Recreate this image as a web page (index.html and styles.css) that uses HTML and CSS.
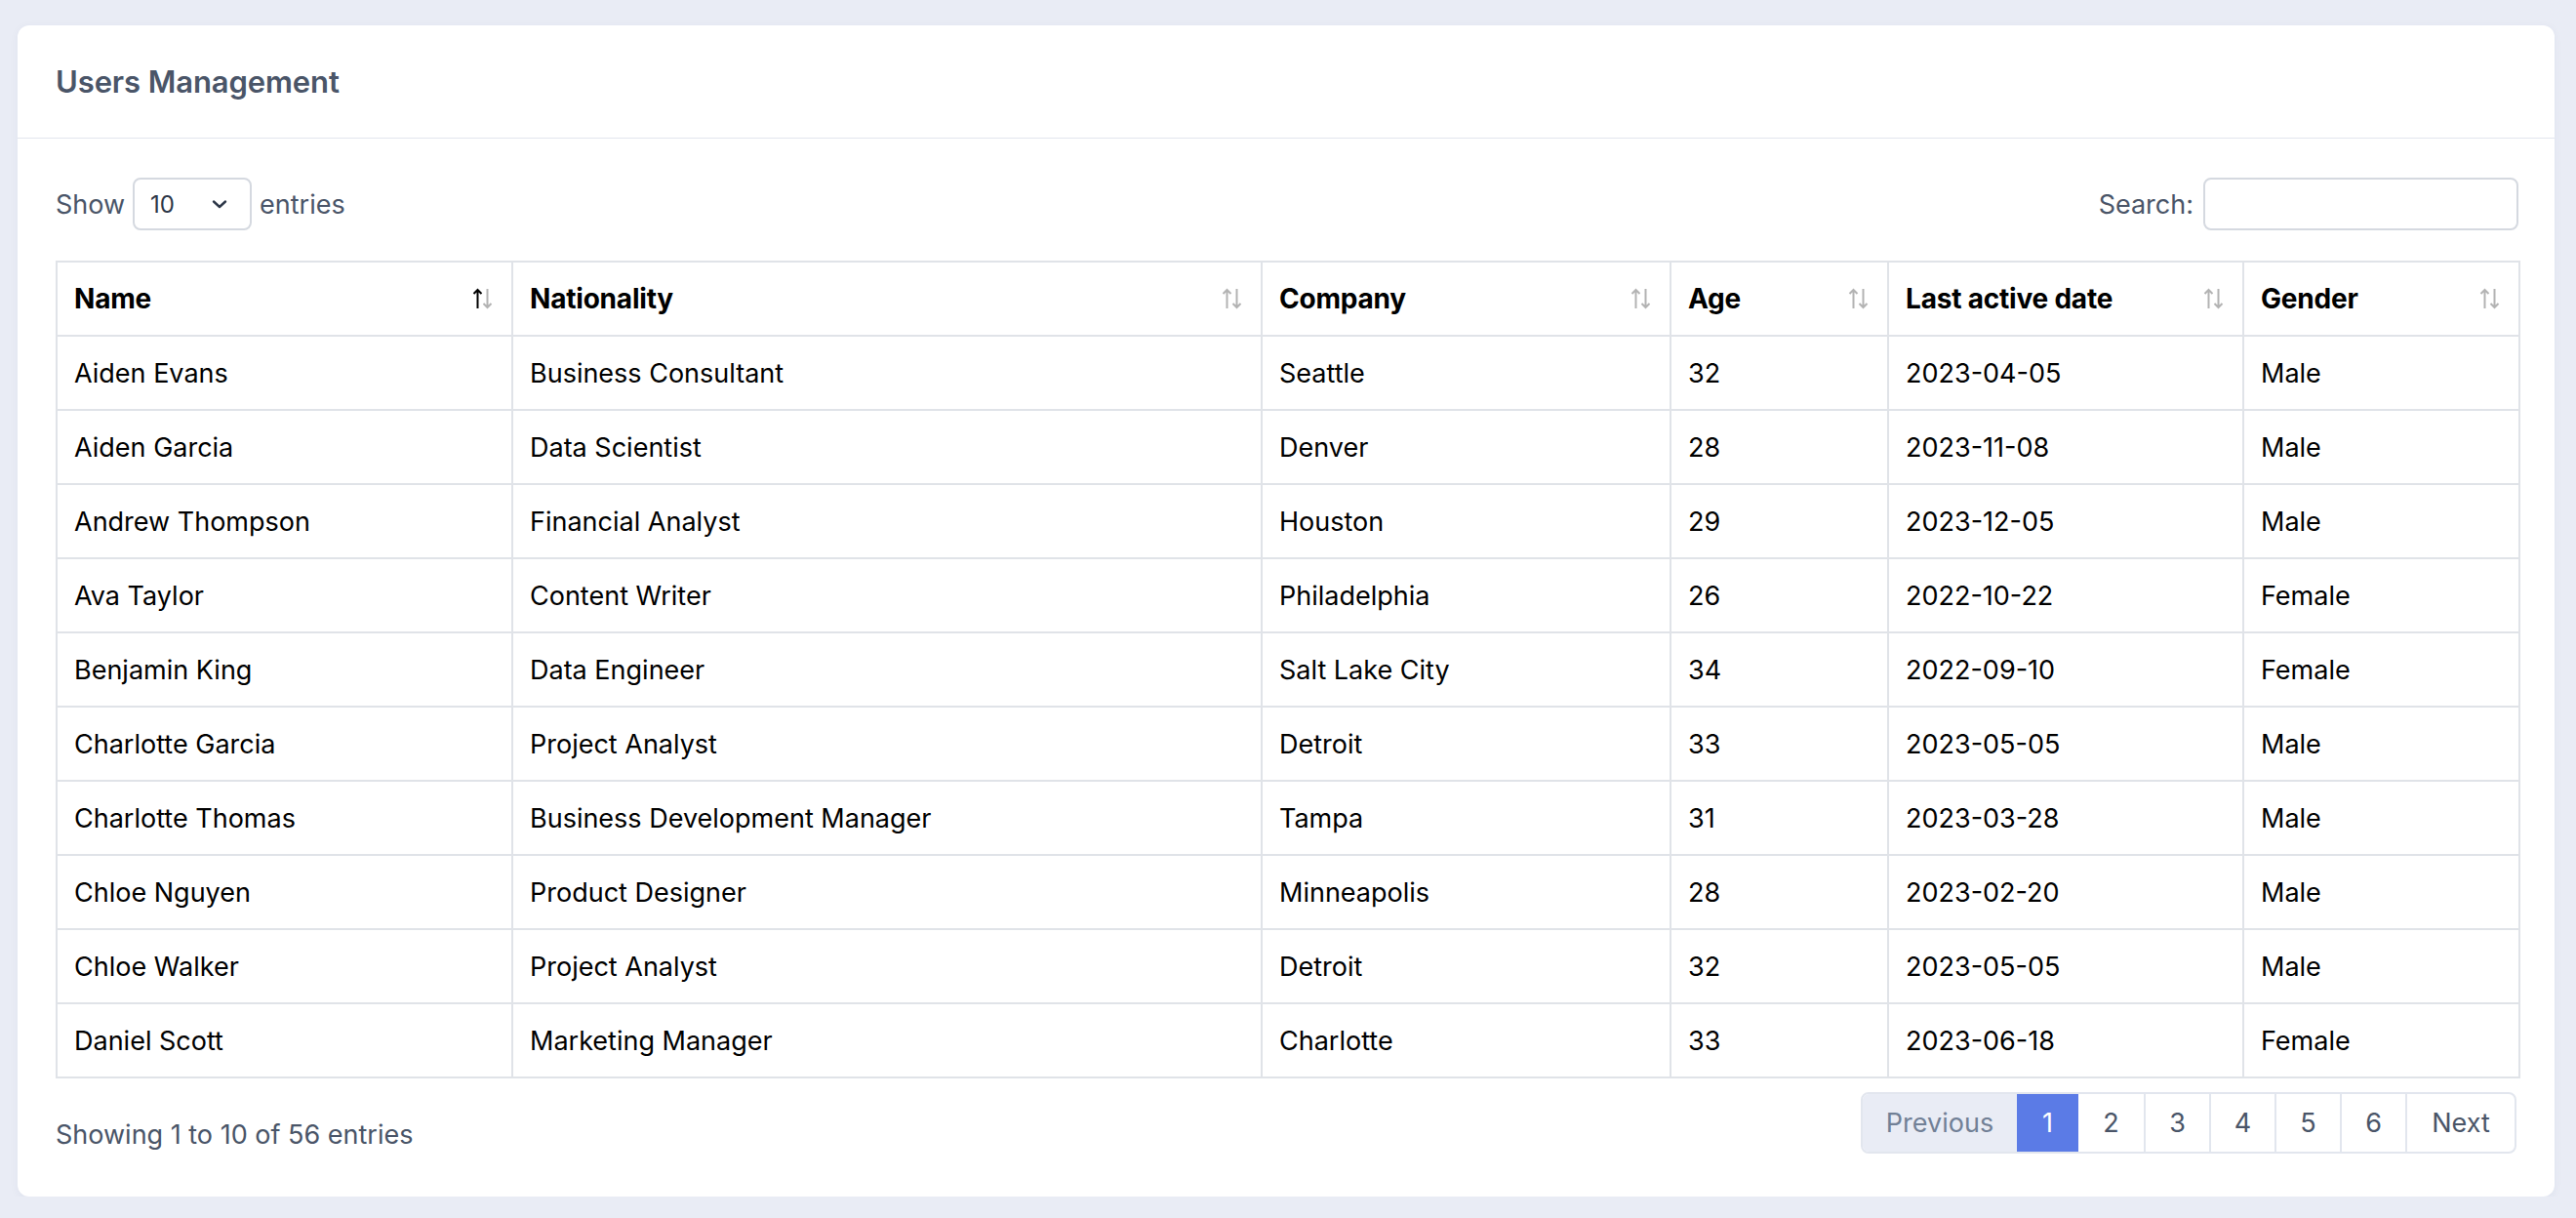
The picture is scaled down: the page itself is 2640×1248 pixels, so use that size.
FILE: index.html
```html
<!DOCTYPE html>
<html lang="en">
<head>
<meta charset="utf-8">
<title>Users Management</title>
<link rel="stylesheet" href="styles.css">
</head>
<body>
<div class="card">
  <div class="card-header"><h1 class="title">Users Management</h1></div>
  <div class="card-body">
    <div class="controls">
      <label class="length">Show
        <span class="select"><span class="select-val">10</span>
          <svg class="chev" width="18" height="12" viewBox="0 0 18 12"><path d="M3 3.5 L9 9 L15 3.5" fill="none" stroke="#2d3748" stroke-width="2.4" stroke-linecap="round" stroke-linejoin="round"/></svg>
        </span>
        entries</label>
      <label class="search">Search: <span class="input"></span></label>
    </div>
    <table class="grid">
      <colgroup>
        <col class="c1"><col class="c2"><col class="c3"><col class="c4"><col class="c5"><col class="c6">
      </colgroup>
      <thead>
        <tr>
          <th><div class="th"><span>Name</span><svg class="sort" width="24" height="22" viewBox="0 0 24 22"><path d="M6.5 21 V2 M2.5 6 L6.5 2 L10.5 6" fill="none" stroke="#000" stroke-width="2"/><path d="M16.5 1 V20 M12.5 16 L16.5 20 L20.5 16" fill="none" stroke="#b3b3b3" stroke-width="2"/></svg></div></th>
          <th><div class="th"><span>Nationality</span><svg class="sort" width="24" height="22" viewBox="0 0 24 22"><path d="M6.5 21 V2 M2.5 6 L6.5 2 L10.5 6" fill="none" stroke="#b3b3b3" stroke-width="2"/><path d="M16.5 1 V20 M12.5 16 L16.5 20 L20.5 16" fill="none" stroke="#b3b3b3" stroke-width="2"/></svg></div></th>
          <th><div class="th"><span>Company</span><svg class="sort" width="24" height="22" viewBox="0 0 24 22"><path d="M6.5 21 V2 M2.5 6 L6.5 2 L10.5 6" fill="none" stroke="#b3b3b3" stroke-width="2"/><path d="M16.5 1 V20 M12.5 16 L16.5 20 L20.5 16" fill="none" stroke="#b3b3b3" stroke-width="2"/></svg></div></th>
          <th><div class="th"><span>Age</span><svg class="sort" width="24" height="22" viewBox="0 0 24 22"><path d="M6.5 21 V2 M2.5 6 L6.5 2 L10.5 6" fill="none" stroke="#b3b3b3" stroke-width="2"/><path d="M16.5 1 V20 M12.5 16 L16.5 20 L20.5 16" fill="none" stroke="#b3b3b3" stroke-width="2"/></svg></div></th>
          <th><div class="th"><span>Last active date</span><svg class="sort" width="24" height="22" viewBox="0 0 24 22"><path d="M6.5 21 V2 M2.5 6 L6.5 2 L10.5 6" fill="none" stroke="#b3b3b3" stroke-width="2"/><path d="M16.5 1 V20 M12.5 16 L16.5 20 L20.5 16" fill="none" stroke="#b3b3b3" stroke-width="2"/></svg></div></th>
          <th><div class="th"><span>Gender</span><svg class="sort" width="24" height="22" viewBox="0 0 24 22"><path d="M6.5 21 V2 M2.5 6 L6.5 2 L10.5 6" fill="none" stroke="#b3b3b3" stroke-width="2"/><path d="M16.5 1 V20 M12.5 16 L16.5 20 L20.5 16" fill="none" stroke="#b3b3b3" stroke-width="2"/></svg></div></th>
        </tr>
      </thead>
      <tbody>
        <tr><td>Aiden Evans</td><td>Business Consultant</td><td>Seattle</td><td>32</td><td>2023-04-05</td><td>Male</td></tr>
        <tr><td>Aiden Garcia</td><td>Data Scientist</td><td>Denver</td><td>28</td><td>2023-11-08</td><td>Male</td></tr>
        <tr><td>Andrew Thompson</td><td>Financial Analyst</td><td>Houston</td><td>29</td><td>2023-12-05</td><td>Male</td></tr>
        <tr><td>Ava Taylor</td><td>Content Writer</td><td>Philadelphia</td><td>26</td><td>2022-10-22</td><td>Female</td></tr>
        <tr><td>Benjamin King</td><td>Data Engineer</td><td>Salt Lake City</td><td>34</td><td>2022-09-10</td><td>Female</td></tr>
        <tr><td>Charlotte Garcia</td><td>Project Analyst</td><td>Detroit</td><td>33</td><td>2023-05-05</td><td>Male</td></tr>
        <tr><td>Charlotte Thomas</td><td>Business Development Manager</td><td>Tampa</td><td>31</td><td>2023-03-28</td><td>Male</td></tr>
        <tr><td>Chloe Nguyen</td><td>Product Designer</td><td>Minneapolis</td><td>28</td><td>2023-02-20</td><td>Male</td></tr>
        <tr><td>Chloe Walker</td><td>Project Analyst</td><td>Detroit</td><td>32</td><td>2023-05-05</td><td>Male</td></tr>
        <tr><td>Daniel Scott</td><td>Marketing Manager</td><td>Charlotte</td><td>33</td><td>2023-06-18</td><td>Female</td></tr>
      </tbody>
    </table>
    <div class="footer">
      <div class="info">Showing 1 to 10 of 56 entries</div>
      <nav class="pager">
        <span class="pg prev">Previous</span>
        <span class="pg active">1</span>
        <span class="pg">2</span>
        <span class="pg">3</span>
        <span class="pg">4</span>
        <span class="pg">5</span>
        <span class="pg">6</span>
        <span class="pg next">Next</span>
      </nav>
    </div>
  </div>
</div>
</body>
</html>
```

FILE: styles.css
```css
* { box-sizing: border-box; }
html, body { margin: 0; }
body {
  background: #e9ecf5;
  font-family: Inter, "Liberation Sans", sans-serif;
  color: #000;
  padding: 26px 22px 0 18px;
}
.card {
  background: #fff;
  border-radius: 12px;
  height: 1200px;
  box-shadow: 0 2px 10px rgba(40, 50, 90, 0.05);
}
.card-header {
  height: 116px;
  border-bottom: 1px solid #e2e6ee;
  display: flex;
  align-items: center;
  padding-left: 39px;
}
.title {
  margin: 0;
  font-size: 31px;
  font-weight: 600;
  color: #4a5568;
  letter-spacing: -0.1px;
}
.card-body {
  padding: 40px 37px 0 39px;
}
.controls {
  display: flex;
  justify-content: space-between;
  align-items: center;
  height: 54px;
  font-size: 27px;
  color: #4a5568;
}
.length, .search {
  display: flex;
  align-items: center;
  gap: 8px;
}
.select {
  width: 122px;
  height: 54px;
  border: 2px solid #d5d9e0;
  border-radius: 8px;
  display: flex;
  align-items: center;
  justify-content: space-between;
  padding: 0 22px 0 16px;
  font-size: 24px;
  color: #2d3748;
}
.input {
  width: 323px;
  height: 54px;
  border: 2px solid #d5d9e0;
  border-radius: 8px;
  margin-left: 2px;
}
.grid {
  margin-top: 31px;
  width: 2524px;
  border-collapse: collapse;
  table-layout: fixed;
  font-size: 27px;
  border: 2px solid #e0e3e8;
}
.c1 { width: 467px; }
.c2 { width: 768px; }
.c3 { width: 419px; }
.c4 { width: 223px; }
.c5 { width: 364px; }
.c6 { width: 283px; }
.grid th, .grid td {
  border: 2px solid #e0e3e8;
  height: 76px;
  padding: 0 17px 0 17px;
  text-align: left;
  vertical-align: middle;
  color: #000;
}
.grid th {
  font-weight: 700;
  font-size: 28px;
  letter-spacing: -0.2px;
}
.th {
  display: flex;
  justify-content: space-between;
  align-items: center;
}
.sort { flex: none; }
.footer {
  display: flex;
  justify-content: space-between;
  align-items: flex-start;
  margin-top: 14px;
}
.info {
  font-size: 27px;
  color: #4a5568;
  margin-top: 27px;
}
.pager {
  display: flex;
  height: 63px;
  border: 2px solid #e2e6ee;
  border-radius: 8px;
  overflow: hidden;
  font-size: 27px;
  color: #4a5568;
  margin-right: 2px;
}
.pg {
  display: flex;
  align-items: center;
  justify-content: center;
  width: 67px;
  border-left: 2px solid #e2e6ee;
}
.pg.prev {
  width: 158px;
  border-left: none;
  background: #e9ecf5;
  color: #718096;
}
.pg.active {
  width: 63px;
  background: #5b7be6;
  color: #fff;
  border-left: none;
  margin: -2px 0;
}
.pg.active + .pg { border-left: none; }
.pg.next { width: 112px; }
```
